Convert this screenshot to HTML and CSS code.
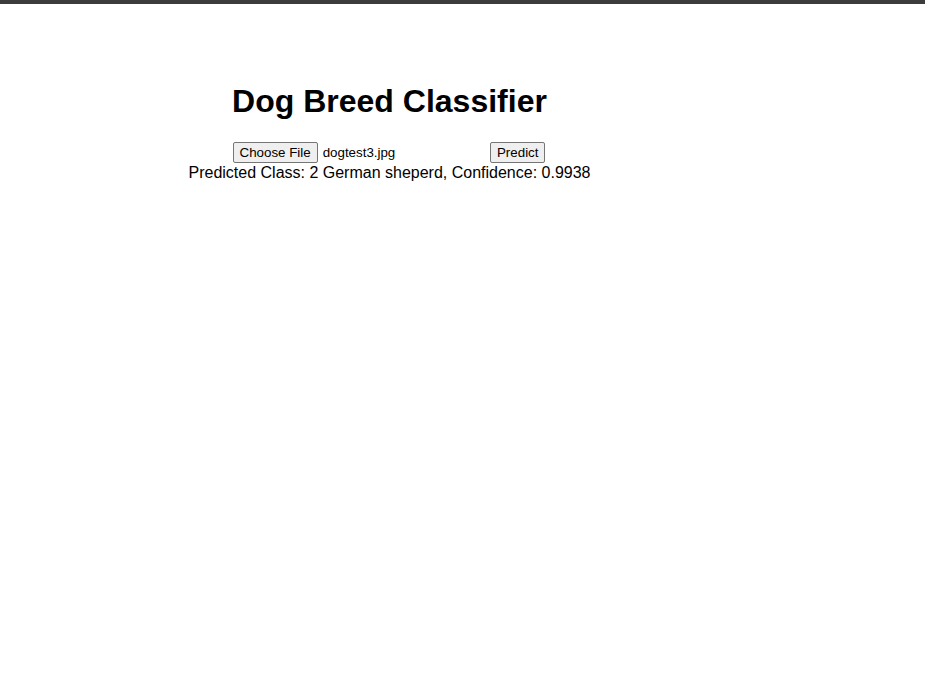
FILE: index.html
```html
<!DOCTYPE html>
<html>
<head>
<meta charset="utf-8">
<title>Dog Breed Classifier</title>
<link rel="stylesheet" href="styles.css">
</head>
<body>
<div class="topbar"></div>
<main class="app">
  <h1 class="title">Dog Breed Classifier</h1>
  <form class="upload">
    <span class="file"><button type="button" class="btn">Choose File</button><span class="fname">dogtest3.jpg</span></span>
    <button type="button" class="btn">Predict</button>
  </form>
  <div class="result">Predicted Class: 2 German sheperd, Confidence: 0.9938</div>
</main>
</body>
</html>
```
FILE: styles.css
```css
html, body {
  margin: 0;
  padding: 0;
  background: #ffffff;
}
body {
  font-family: "Liberation Sans", Arial, sans-serif;
  font-size: 16px;
  color: #000;
}
.topbar {
  height: 4px;
  background: #3c3c3c;
}
.app {
  width: 779px;
  text-align: center;
  padding-top: 58px;
}
.title {
  font-size: 32px;
  font-weight: bold;
  margin: 21px 0 22px;
}
.upload {
  margin: 0 0 0 -1px;
}
.file {
  display: inline-block;
  width: 253px;
  text-align: left;
  font-size: 13.333px;
}
.fname {
  margin-left: 5px;
}
.btn {
  font-family: "Liberation Sans", Arial, sans-serif;
  font-size: 13.333px;
  padding: 2px 6px 2px;
  border: 1px solid #767676;
  border-radius: 2px;
  background: #efefef;
  color: #000;
  margin: 0;
}
.result {
  margin: 0;
  padding-top: 1px;
}
```
